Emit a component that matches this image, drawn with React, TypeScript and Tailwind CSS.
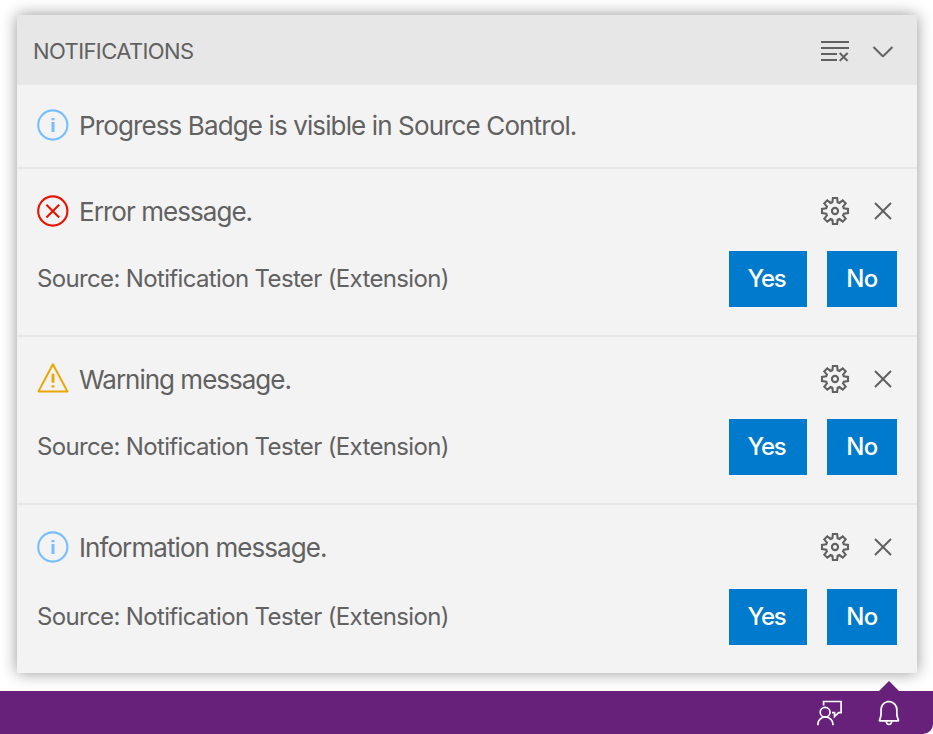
import type { ReactNode } from "react";
import { VscBell, VscChevronDown, VscClearAll, VscClose } from "react-icons/vsc";

type Severity = "info" | "error" | "warning";

function SeverityIcon({ severity }: { severity: Severity }) {
  if (severity === "warning") {
    return (
      <svg className="size-8 shrink-0" viewBox="0 0 32 32" fill="none" stroke="#e9a700" strokeWidth="2">
        <path d="M15.9 1.2 30.4 28.4H1.5Z" strokeLinejoin="round" />
        <path d="M16 10.8v9M16 22.2v2.3" strokeWidth="2.8" />
      </svg>
    );
  }
  if (severity === "error") {
    return (
      <svg className="size-8 shrink-0" viewBox="0 0 32 32" fill="none" stroke="#e51400" strokeWidth="2.1">
        <circle cx="15.8" cy="16" r="14.6" />
        <path d="m9.4 9.8 12.8 12.8m0-12.8L9.4 22.6" />
      </svg>
    );
  }
  return (
    <svg className="size-8 shrink-0" viewBox="0 0 32 32" fill="none" stroke="#75beff" strokeWidth="2.1">
      <circle cx="15.8" cy="16" r="14.6" />
      <path d="M16 13v10M16 9v2.2" strokeWidth="3" />
    </svg>
  );
}

const gearTooth = [
  [-2.6, -8.8],
  [-2.1, -13],
  [2.1, -13],
  [2.6, -8.8],
];

const gearPoints = Array.from({ length: 8 }, (_, i) => (i * Math.PI) / 4)
  .flatMap((a) =>
    gearTooth.map(([x, y]) => [
      16 + x * Math.cos(a) - y * Math.sin(a),
      16 + x * Math.sin(a) + y * Math.cos(a),
    ]),
  )
  .map(([x, y]) => `${x.toFixed(2)},${y.toFixed(2)}`)
  .join(" ");

function GearIcon() {
  return (
    <svg className="size-8" viewBox="0 0 32 32" fill="none" stroke="currentColor" strokeWidth="2.1">
      <polygon points={gearPoints} />
      <circle cx="16" cy="16" r="3.1" />
    </svg>
  );
}

function FeedbackIcon() {
  return (
    <svg className="h-7 w-[26px]" viewBox="0 0 26 28" fill="none" stroke="currentColor" strokeWidth="1.7">
      <circle cx="8.1" cy="13.2" r="4.9" />
      <path d="M.9 26.2V25a7.4 6.9 0 0 1 15 0v1.2" />
      <path d="M6.6 6.6V2.5h17.5v11.2h-2.5L17.5 17.6v-3.9H15" />
    </svg>
  );
}

function Button({ className, children }: { className: string; children: ReactNode }) {
  return (
    <button className={`h-14 bg-[#007acc] text-2xl font-medium text-white ${className}`}>
      {children}
    </button>
  );
}

interface NotificationProps {
  severity: Severity;
  message: string;
  messageClass: string;
  gapClass: string;
}

function Notification({ severity, message, messageClass, gapClass }: NotificationProps) {
  return (
    <section className="border-t-2 border-[#e7e7e7] px-5 pt-5">
      <div className="flex h-11 items-center">
        <SeverityIcon severity={severity} />
        <span className={`ml-2.5 pt-px text-[26px] ${messageClass}`}>{message}</span>
        <div className="-mr-0.5 ml-auto flex gap-4">
          <GearIcon />
          <VscClose className="size-8" />
        </div>
      </div>
      <div className={`flex items-center ${gapClass}`}>
        <span className="mr-auto text-2xl tracking-[-0.65px]">Source: Notification Tester (Extension)</span>
        <Button className="mr-5 w-[78px] pr-[3px] tracking-[-1.2px]">Yes</Button>
        <Button className="w-[70px] tracking-[-0.5px]">No</Button>
      </div>
    </section>
  );
}

export default function App() {
  return (
    <div className="flex h-[734px] w-[933px] flex-col overflow-hidden bg-white pt-[15px] font-['Inter',sans-serif] text-[#616161]">
      <main className="ml-[17px] h-[658px] w-[900px] rounded-t-[2px] bg-[#f3f3f3] shadow-[0_0_16px_rgba(0,0,0,0.42)]">
        <header className="flex h-[70px] items-center rounded-t-[2px] bg-[#e7e7e7] pr-[18px] pl-4">
          <h1 className="mr-auto pt-0.5 text-[22px] tracking-[-0.6px]">NOTIFICATIONS</h1>
          <div className="flex gap-4 pt-0.5">
            <VscClearAll className="size-8" />
            <VscChevronDown className="size-8" strokeWidth="0.2" />
          </div>
        </header>
        <section className="flex h-[82px] items-center px-5 pb-0.5">
          <SeverityIcon severity="info" />
          <span className="ml-2.5 pt-px text-[26px] tracking-[-0.88px]">Progress Badge is visible in Source Control.</span>
        </section>
        <Notification severity="error" message="Error message." messageClass="tracking-[-0.95px]" gapClass="pt-[18px] pb-7" />
        <Notification severity="warning" message="Warning message." messageClass="tracking-[-1px]" gapClass="pt-[18px] pb-7" />
        <Notification severity="info" message="Information message." messageClass="tracking-[-0.92px]" gapClass="pt-5" />
      </main>
      <footer className="relative mt-[18px] flex h-[43px] items-center justify-end gap-8 rounded-br-[10px] bg-[#68217a] pr-[30px] text-white">
        <svg className="absolute -top-[10px] right-[34px] h-[10px] w-5" viewBox="0 0 20 10">
          <path d="M0 10 10 0l10 10Z" fill="#68217a" />
        </svg>
        <FeedbackIcon />
        <VscBell className="size-7" />
      </footer>
    </div>
  );
}
